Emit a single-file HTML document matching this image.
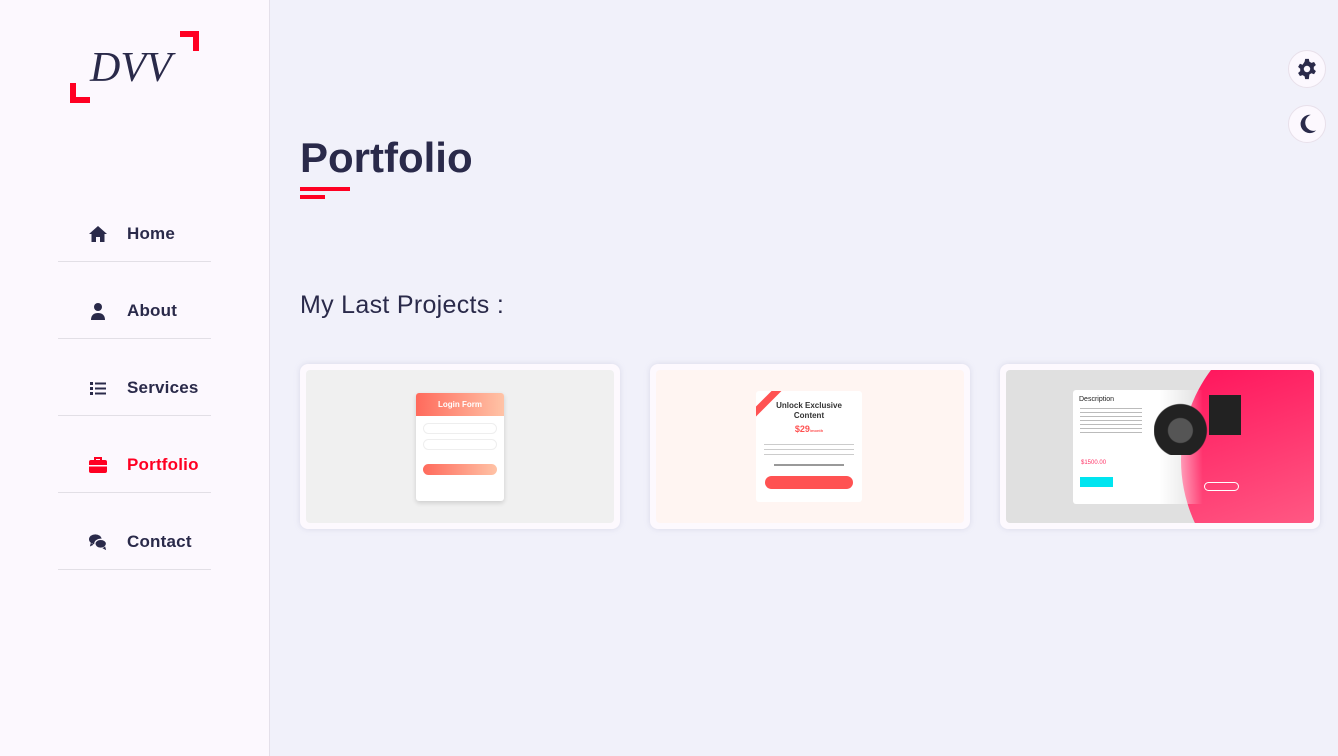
<!DOCTYPE html>
<html><head><meta charset="utf-8"><style>
*{margin:0;padding:0;box-sizing:border-box}
body{width:1338px;height:756px;overflow:hidden;background:#f1f1fa;font-family:"Liberation Sans",sans-serif;color:#2a2a4a;position:relative}
.side{position:absolute;left:0;top:0;width:270px;height:756px;background:#fcf8fe;border-right:1px solid #e4e0ea}
.logo{position:absolute;left:70px;top:31px;width:130px;height:72px}
.nav{position:absolute;left:58px;width:153px;height:77px;border-bottom:1px solid #e2dfe6}
.nav .ic{position:absolute;left:31px;top:40px;width:18px;height:18px}
.nav span{position:absolute;left:69px;top:39px;font-size:17px;font-weight:bold;letter-spacing:.2px}
h1{position:absolute;left:300px;top:134px;font-size:42px;font-weight:bold;color:#2a2a4a}
.u1{position:absolute;left:300px;top:187px;width:50px;height:4px;background:#ff0022}
.u2{position:absolute;left:300px;top:195px;width:25px;height:4px;background:#ff0022}
h2{position:absolute;left:300px;top:291px;font-size:25px;font-weight:normal;letter-spacing:.3px}
.card{position:absolute;top:364px;width:320px;height:165px;background:#fdf9fe;border-radius:8px;box-shadow:0 0 6px rgba(180,180,210,.4)}
.in{position:absolute;left:6px;top:6px;width:308px;height:153px;border-radius:4px;overflow:hidden}
.btn{position:absolute;left:1288px;width:38px;height:38px;border-radius:50%;background:#fcf8fe;border:1px solid #e8e0ea}
</style></head><body>
<div class="side">
<svg class="logo" viewBox="0 0 130 72">
<path d="M3 52v17h17" fill="none" stroke="#ff0022" stroke-width="6"/>
<path d="M110 3h16v17" fill="none" stroke="#ff0022" stroke-width="6"/>
<text x="20" y="50" font-family="Liberation Serif,serif" font-style="italic" font-size="42" fill="#2a2a4a">DVV</text>
</svg>
<div class="nav" style="top:185px"><svg class="ic" viewBox="0 0 18 18"><path d="M9 1L0 9h2.5v8h4.5v-5h4v5h4.5V9H18z" fill="#2a2a4a"/></svg><span>Home</span></div>
<div class="nav" style="top:262px"><svg class="ic" viewBox="0 0 18 18"><circle cx="9" cy="5" r="4" fill="#2a2a4a"/><path d="M2 18c0-5 3-7 7-7s7 2 7 7z" fill="#2a2a4a"/></svg><span>About</span></div>
<div class="nav" style="top:339px"><svg class="ic" viewBox="0 0 18 18" fill="#2a2a4a"><rect x="1" y="3" width="3" height="3"/><rect x="6" y="3.5" width="11" height="2"/><rect x="1" y="8" width="3" height="3"/><rect x="6" y="8.5" width="11" height="2"/><rect x="1" y="13" width="3" height="3"/><rect x="6" y="13.5" width="11" height="2"/></svg><span>Services</span></div>
<div class="nav" style="top:416px"><svg class="ic" viewBox="0 0 18 18"><rect x="0" y="4" width="18" height="13" rx="2" fill="#ff0022"/><path d="M6 4V2h6v2" fill="none" stroke="#ff0022" stroke-width="2"/><rect x="0" y="9" width="18" height="1.5" fill="#fcf8fe"/></svg><span style="color:#ff0022">Portfolio</span></div>
<div class="nav" style="top:493px"><svg class="ic" viewBox="0 0 20 18"><ellipse cx="7" cy="6" rx="7" ry="5.5" fill="#2a2a4a"/><ellipse cx="13" cy="11" rx="6.5" ry="5" fill="#2a2a4a" stroke="#fcf8fe" stroke-width="1.5"/><path d="M2 10l-1 4 4-2zM18 14l1 4-4-2z" fill="#2a2a4a"/></svg><span>Contact</span></div>
</div>
<div class="btn" style="top:50px"><svg viewBox="0 0 24 24" width="22" height="22" style="position:absolute;left:7px;top:7px"><path d="M10 1h4l.6 3 2.2 1.3 2.9-1 2 3.4-2.3 2v2.6l2.3 2-2 3.4-2.9-1-2.2 1.3L14 23h-4l-.6-3-2.2-1.3-2.9 1-2-3.4 2.3-2v-2.6l-2.3-2 2-3.4 2.9 1L9.4 4z" fill="#2a2a4a"/><circle cx="12" cy="12" r="3.5" fill="#fcf8fe"/></svg></div>
<div class="btn" style="top:105px"><svg viewBox="0 0 24 24" width="22" height="22" style="position:absolute;left:8px;top:7px"><path d="M15 2A10 10 0 1 0 21 19 8 8 0 0 1 15 2z" fill="#2a2a4a"/></svg></div>
<h1>Portfolio</h1><div class="u1"></div><div class="u2"></div>
<h2>My Last Projects :</h2>
<div class="card" style="left:300px"><div class="in" style="background:#f0f0f0">
<div style="position:absolute;left:110px;top:23px;width:88px;height:108px;background:#fff;border-radius:3px;box-shadow:0 2px 5px rgba(0,0,0,.15);overflow:hidden">
<div style="height:23px;background:linear-gradient(90deg,#ff6a5c,#ffc3a6);color:#fff;font-size:8px;font-weight:bold;text-align:center;line-height:23px">Login Form</div>
<div style="margin:7px 7px 0;height:11px;border:1px solid #eee;border-radius:6px"></div>
<div style="margin:5px 7px 0;height:11px;border:1px solid #eee;border-radius:6px"></div>
<div style="margin:14px 7px 0;height:11px;border-radius:6px;background:linear-gradient(90deg,#ff6a5c,#ffc3a6)"></div>
</div></div></div>
<div class="card" style="left:650px"><div class="in" style="background:#fff5f2">
<div style="position:absolute;left:100px;top:21px;width:106px;height:111px;background:#fff;border-radius:3px;text-align:center;overflow:hidden">
<div style="position:absolute;left:-14px;top:6px;width:50px;height:7px;background:#ff5252;transform:rotate(-45deg)"></div>
<div style="font-size:8px;font-weight:bold;margin-top:10px;line-height:10px;color:#333">Unlock Exclusive<br>Content</div>
<div style="font-size:9px;font-weight:bold;color:#ff5252;margin-top:3px">$29<span style="font-size:4px">/month</span></div>
<div style="margin:10px 8px 0;height:14px;background:repeating-linear-gradient(#ccc 0 1px,transparent 1px 5px)"></div>
<div style="margin:6px 18px 0;height:2px;background:#999"></div>
<div style="margin:10px 9px 0;height:13px;border-radius:7px;background:#ff5252"></div>
</div></div></div>
<div class="card" style="left:1000px"><div class="in" style="background:#e0e0e0">
<div style="position:absolute;left:175px;top:-60px;width:300px;height:300px;border-radius:50%;background:linear-gradient(160deg,#ff0050,#ff8aa0)"></div>
<div style="position:absolute;left:67px;top:20px;width:173px;height:114px;background:linear-gradient(90deg,#fff 50%,transparent 75%);border-radius:3px"></div>
<div style="position:absolute;left:73px;top:26px;font-size:7px;color:#222">Description</div>
<div style="position:absolute;left:74px;top:38px;width:62px;height:25px;background:repeating-linear-gradient(#bbb 0 1px,transparent 1px 4px)"></div>
<div style="position:absolute;left:75px;top:90px;font-size:6px;color:#ff3366">$1500.00</div>
<div style="position:absolute;left:74px;top:107px;width:33px;height:10px;background:#00e5f0"></div>
<div style="position:absolute;left:148px;top:15px;width:88px;height:70px;background:radial-gradient(circle at 30% 65%,#555 0 12px,#222 13px 26px,transparent 27px),linear-gradient(#222,#222) 55px 10px/32px 40px no-repeat"></div>
<div style="position:absolute;left:198px;top:112px;width:35px;height:9px;border:1px solid #fff;border-radius:5px"></div>
</div></div>
</body></html>
